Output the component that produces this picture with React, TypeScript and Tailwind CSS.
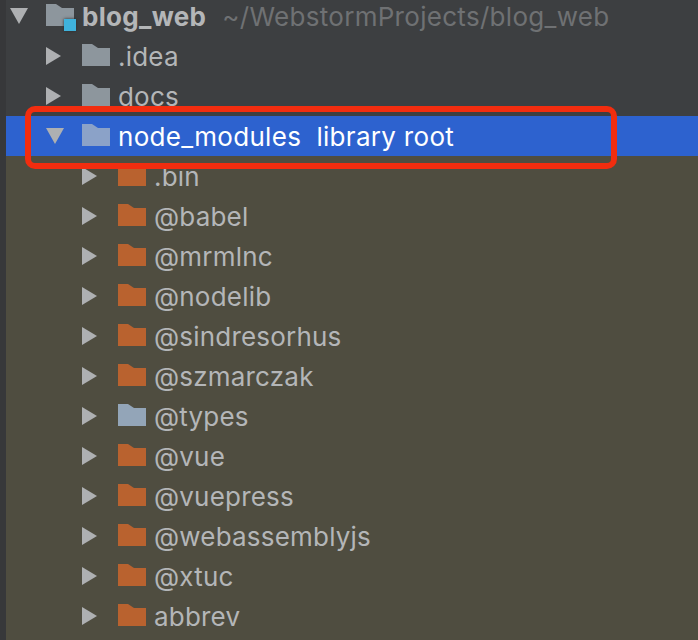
const Arrow = ({ open }: { open?: boolean }) => (
  <svg width="18" height="18" viewBox="0 0 18 18" className="shrink-0 mb-[1px]">
    {open ? <path d="M0 1 H18 L9 17 Z" fill="#aeb0b2" /> : <path d="M0 0 L15 9 L0 18 Z" fill="#aeb0b2" />}
  </svg>
);

const Folder = ({ color }: { color: string }) => (
  <svg width="28" height="22" viewBox="0 0 28 22" className="shrink-0">
    <path d="M0 0 H10 L16 4 H28 V22 H0 Z" fill={color} />
  </svg>
);

const Row = ({ name, color, indent }: { name: string; color: string; indent: string }) => (
  <div className={`h-[40px] flex items-center text-[26px] tracking-[0.2px] text-[#b4b6b8] ${indent}`}>
    <Arrow />
    <div className="ml-[18px] mb-[2px]">
      <Folder color={color} />
    </div>
    <span className="ml-[8px]">{name}</span>
  </div>
);

const rows = [
  { name: ".bin", color: "#b9622f" },
  { name: "@babel", color: "#b9622f" },
  { name: "@mrmlnc", color: "#b9622f" },
  { name: "@nodelib", color: "#b9622f" },
  { name: "@sindresorhus", color: "#b9622f" },
  { name: "@szmarczak", color: "#b9622f" },
  { name: "@types", color: "#93a5b8" },
  { name: "@vue", color: "#b9622f" },
  { name: "@vuepress", color: "#b9622f" },
  { name: "@webassemblyjs", color: "#b9622f" },
  { name: "@xtuc", color: "#b9622f" },
  { name: "abbrev", color: "#b9622f" },
];

export default function App() {
  return (
    <div className="w-[698px] h-[640px] overflow-hidden bg-[#3d3f41] flex font-['Inter',sans-serif]">
      <div className="w-[6px] shrink-0 bg-[#37383a]" />
      <div className="flex-1 -mt-[4px]">
        <div className="h-[40px] flex items-center pl-[4px]">
          <Arrow open />
          <div className="relative ml-[18px] mb-[2px] w-[28px] h-[22px]">
            <Folder color="#8d969d" />
            <div className="absolute left-[18px] top-[15px] w-[12px] h-[12px] bg-[#3fb2dc] shadow-[0_0_3px_#2a2c2e]" />
          </div>
          <span className="ml-[8px] text-[26px] tracking-[0.3px] font-bold text-[#b4b6b8]">blog_web</span>
          <span className="ml-[16px] text-[26px] tracking-[0.3px] text-[#6f7173]">~/WebstormProjects/blog_web</span>
        </div>
        <Row name=".idea" color="#8d969d" indent="pl-[40px]" />
        <Row name="docs" color="#8d969d" indent="pl-[40px]" />
        <div className="relative h-[40px] flex items-center pl-[40px] text-[26px] tracking-[0.3px] text-white bg-[#2d62cf]">
          <Arrow open />
          <div className="ml-[18px] mb-[2px]">
            <Folder color="#8ba2c8" />
          </div>
          <span className="ml-[8px] whitespace-pre">node_modules  library root</span>
          <div className="absolute left-[19px] top-[-10px] w-[592px] h-[63px] rounded-[10px] border-[6px] border-[#f22d0f]" />
        </div>
        <div className="bg-[#4f4d40] pb-[40px]">
          {rows.map((r) => (
            <Row key={r.name} name={r.name} color={r.color} indent="pl-[76px]" />
          ))}
        </div>
      </div>
    </div>
  );
}
